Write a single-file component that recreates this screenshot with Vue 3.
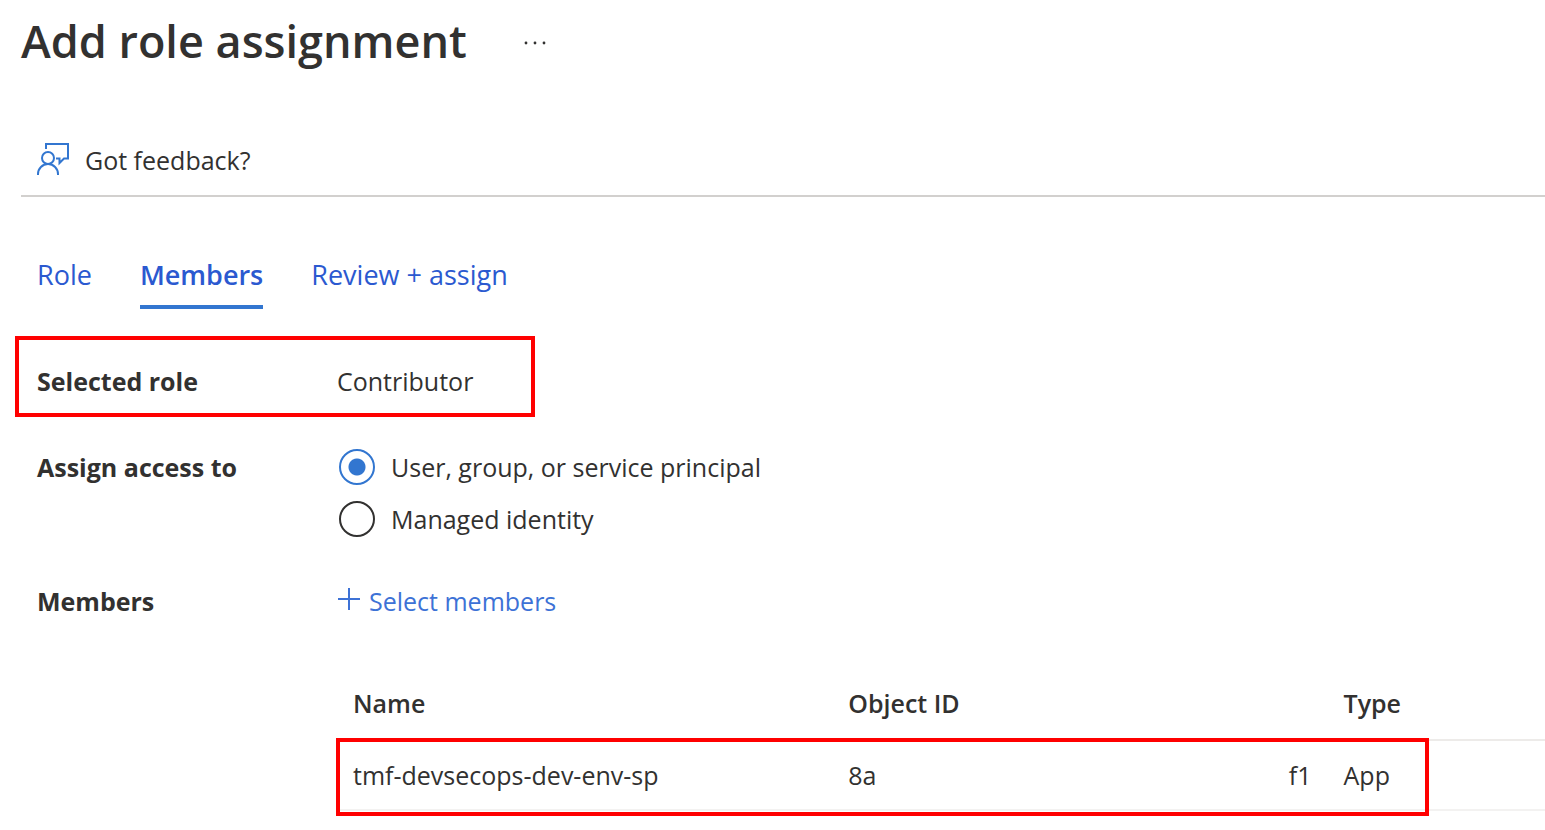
<script setup>
import { ref } from 'vue'

const tabs = ['Role', 'Members', 'Review + assign']
const activeTab = ref('Members')

const accessOptions = [
  { id: 'access-principal', value: 'principal', label: 'User, group, or service principal' },
  { id: 'access-identity', value: 'identity', label: 'Managed identity' },
]
const access = ref('principal')

const members = [
  { name: 'tmf-devsecops-dev-env-sp', idStart: '8a', idEnd: 'f1', type: 'App' },
]
</script>

<template>
  <main class="page">
    <header class="heading">
      <h1>Add role assignment</h1>
      <button class="more" type="button" aria-label="More options">
        <svg width="26" height="4" viewBox="0 0 26 4" fill="#323130">
          <circle cx="3" cy="2" r="1.4" />
          <circle cx="12" cy="2" r="1.4" />
          <circle cx="21" cy="2" r="1.4" />
        </svg>
      </button>
    </header>

    <div class="toolbar">
      <button class="feedback" type="button">
        <svg width="32" height="36" viewBox="0 0 32 36" fill="none" stroke="#3276d0" stroke-width="2" aria-hidden="true">
          <path d="M9 7V2H31V16.500H27L22.500 21V16.500H19" />
          <circle cx="11" cy="16" r="6" />
          <path d="M1 33V32A10 10 0 0 1 21 32V33" />
        </svg>
        <span>Got feedback?</span>
      </button>
    </div>

    <nav class="tabs" role="tablist">
      <button
        v-for="tab in tabs"
        :key="tab"
        type="button"
        role="tab"
        class="tab"
        :class="{ active: tab === activeTab }"
        :aria-selected="tab === activeTab"
        @click="activeTab = tab"
      >{{ tab }}</button>
    </nav>

    <section class="form">
      <div class="row">
        <span class="label">Selected role</span>
        <span class="value">Contributor</span>
        <span class="mark mark-role"></span>
      </div>

      <div class="row access" role="radiogroup" aria-labelledby="access-label">
        <span id="access-label" class="label">Assign access to</span>
        <div class="options">
          <div v-for="option in accessOptions" :key="option.id" class="option">
            <input :id="option.id" v-model="access" type="radio" name="access" :value="option.value" />
            <label :for="option.id">{{ option.label }}</label>
          </div>
        </div>
      </div>

      <div class="row">
        <span class="label">Members</span>
        <div class="members">
          <a class="select" href="#">
            <svg width="24" height="28" viewBox="0 0 24 28" fill="none" stroke="#3d72d6" stroke-width="2" aria-hidden="true">
              <path d="M1 12H23M12 1V23" />
            </svg>
            <span>Select members</span>
          </a>
          <div class="grid">
            <table>
              <thead>
                <tr>
                  <th class="wide" scope="col">Name</th>
                  <th class="wide" scope="col">Object ID</th>
                  <th scope="col">Type</th>
                </tr>
              </thead>
              <tbody>
                <tr v-for="member in members" :key="member.name">
                  <td>{{ member.name }}</td>
                  <td>
                    <div class="object-id"><span>{{ member.idStart }}</span><span>{{ member.idEnd }}</span></div>
                  </td>
                  <td>{{ member.type }}</td>
                </tr>
              </tbody>
            </table>
            <span class="mark mark-member"></span>
          </div>
        </div>
      </div>
    </section>
  </main>
</template>

<style>
body {
  margin: 0;
  background: #fff;
}
</style>

<style scoped>
.page {
  box-sizing: border-box;
  padding: 9px 0 14px 21px;
  color: #323130;
  font-family: "Open Sans", "Noto Sans", sans-serif;
  font-size: 25px;
  line-height: 36px;
  overflow: hidden;
}

button {
  padding: 0;
  border: 0;
  background: none;
  color: inherit;
  font: inherit;
  cursor: pointer;
}

.heading {
  display: flex;
  align-items: center;
  gap: 56px;
}

h1 {
  margin: 0;
  font-size: 45px;
  font-weight: 600;
  line-height: 64px;
}

.more {
  display: flex;
  align-items: center;
  height: 32px;
  padding-top: 4px;
}

.toolbar {
  display: flex;
  margin-top: 69px;
  padding: 0 16px 17px;
  border-bottom: 2px solid #d2d0ce;
}

.feedback {
  display: flex;
  align-items: center;
  gap: 16px;
}

.tabs {
  display: flex;
  gap: 48px;
  margin-top: 60px;
  padding-left: 16px;
}

.tab {
  padding-bottom: 12px;
  border-bottom: 4px solid transparent;
  color: #2b59d0;
  font-size: 27px;
}

.tab.active {
  border-bottom-color: #3276d0;
  font-weight: 600;
}

.form {
  display: flex;
  flex-direction: column;
  gap: 46px;
  margin-top: 54px;
  padding-left: 16px;
}

.row {
  position: relative;
  display: grid;
  grid-template-columns: 300px minmax(0, 1fr);
}

.access {
  padding-top: 4px;
}

.label {
  font-weight: 700;
}

.options {
  display: flex;
  flex-direction: column;
  gap: 16px;
  padding-left: 2px;
}

.option {
  display: flex;
  align-items: center;
  gap: 16px;
}

.option input {
  box-sizing: border-box;
  width: 36px;
  height: 36px;
  margin: 0;
  border: 2px solid #323130;
  border-radius: 50%;
  appearance: none;
}

.option input:checked {
  border-color: #3276d0;
  background: radial-gradient(circle, #3276d0 0 8px, #fff 9px);
}

.select {
  display: inline-flex;
  align-items: center;
  gap: 8px;
  color: #3d72d6;
  text-decoration: none;
}

.grid {
  position: relative;
  margin-top: 46px;
}

table {
  width: 100%;
  border-collapse: separate;
  border-spacing: 0;
  table-layout: fixed;
}

th,
td {
  padding: 16px;
  border-bottom: 2px solid #edebe9;
  text-align: left;
}

td {
  border-bottom-color: #f3f2f1;
}

th {
  padding-bottom: 18px;
  font-weight: 600;
}

.wide {
  width: 41%;
  box-sizing: border-box;
}

.object-id {
  display: flex;
  justify-content: space-between;
}

.mark {
  position: absolute;
  box-sizing: border-box;
  border: 4px solid #f00;
  pointer-events: none;
}

.mark-role {
  top: -27px;
  bottom: -18px;
  left: -22px;
  width: 520px;
}

.mark-member {
  top: 69px;
  right: 116px;
  bottom: -5px;
  left: -1px;
}
</style>
